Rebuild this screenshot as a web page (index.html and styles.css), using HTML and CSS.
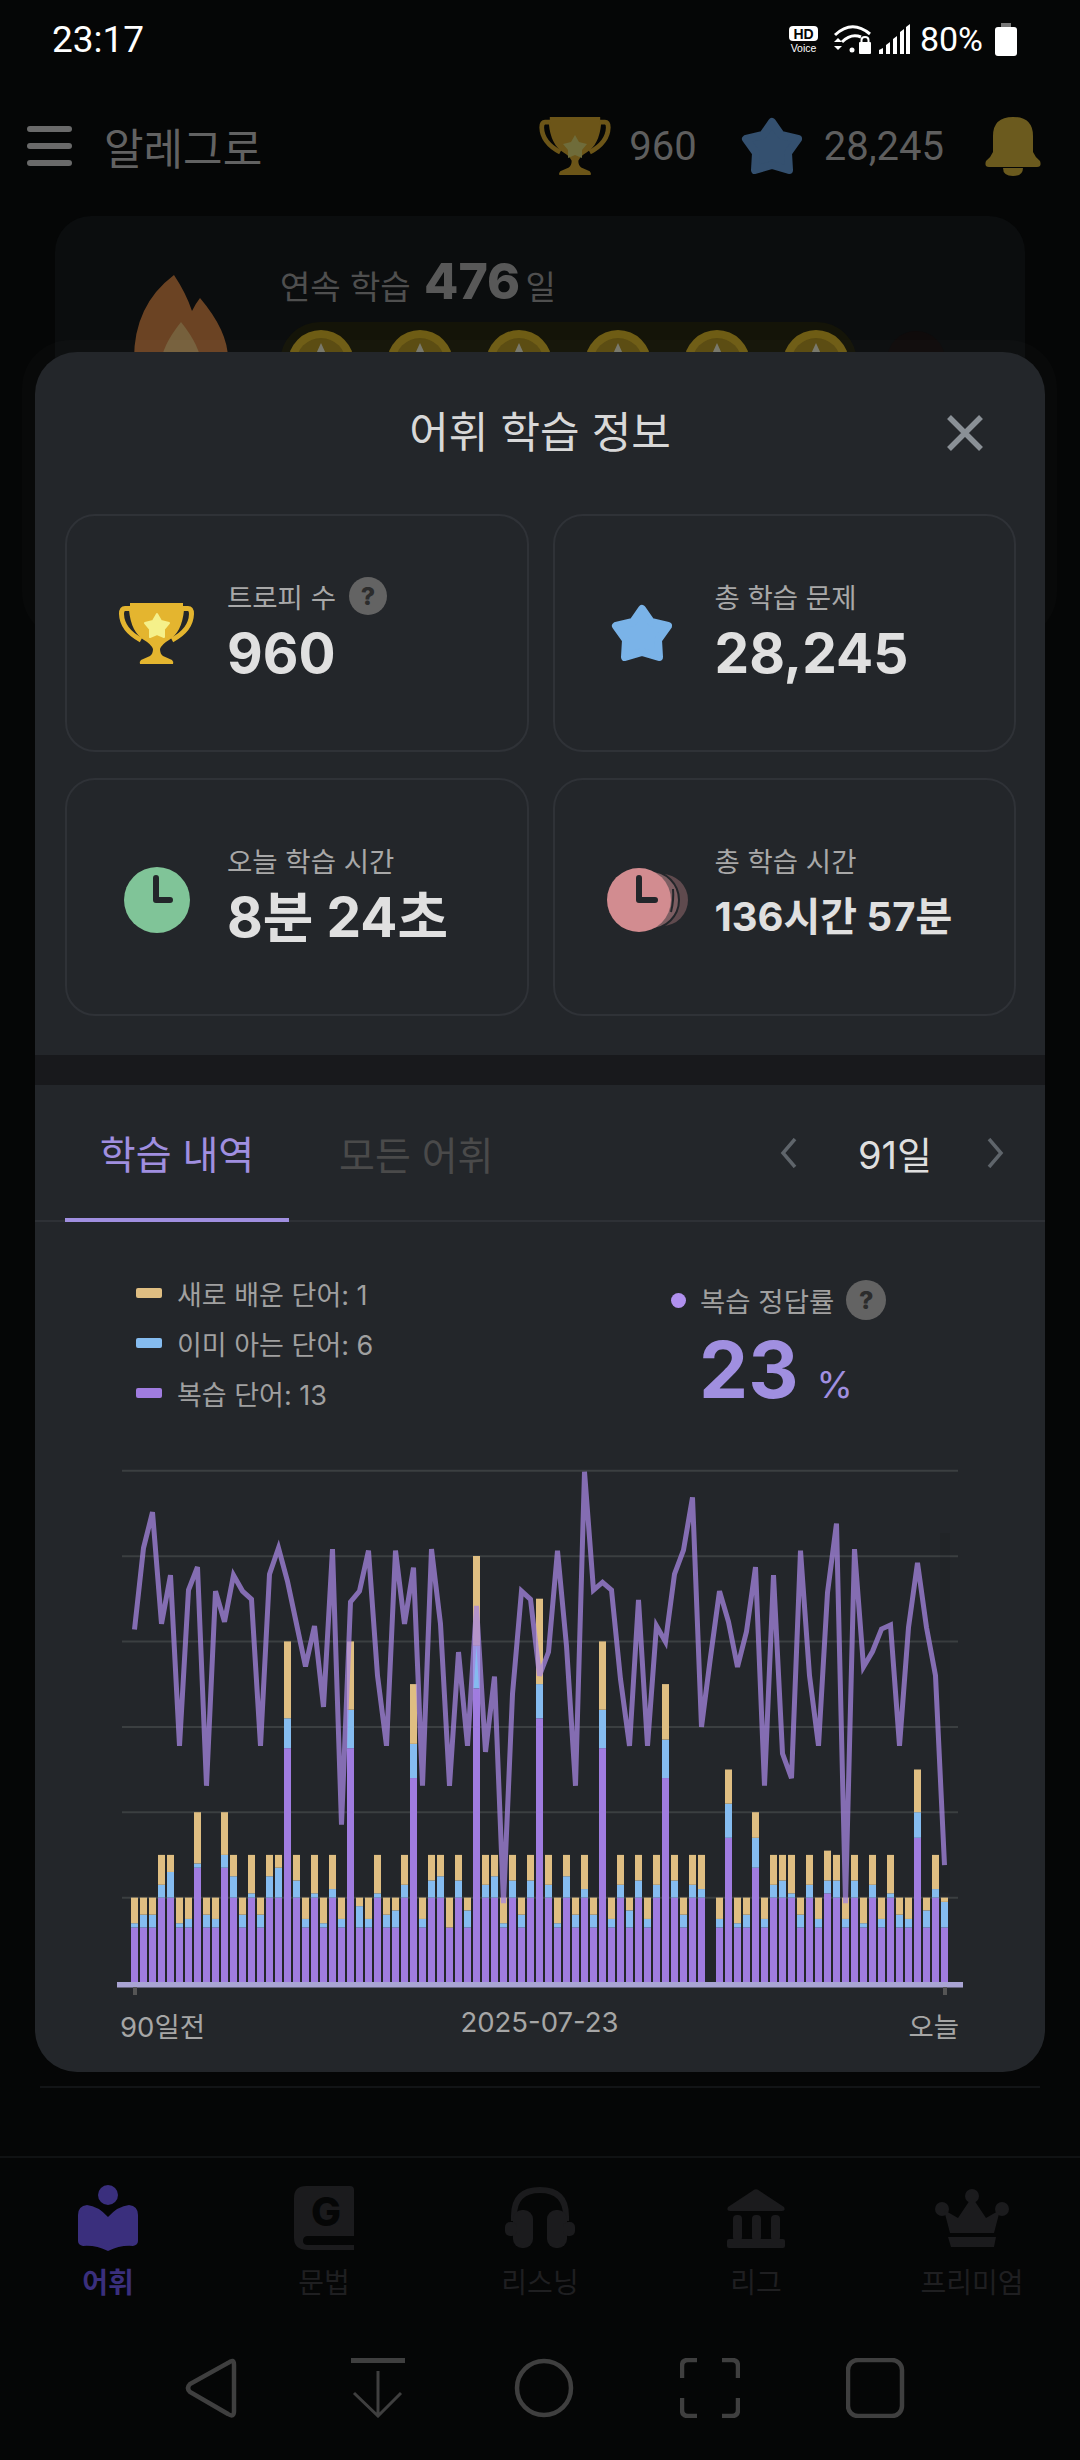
FILE: index.html
```html
<!DOCTYPE html>
<html lang="ko">
<head>
    <meta charset="UTF-8">
    <meta name="viewport" content="width=device-width, initial-scale=1.0">
    <title>알레그로 - 어휘 학습 정보</title>
    <link rel="stylesheet" href="styles.css">
</head>
<body>

    <svg class="defs" width="0" height="0">
        <symbol id="star" viewBox="0 0 64 60">
            <polygon points="32,6 41,19 58,23 48,37 49,54 32,49 15,54 16,37 6,23 23,19" stroke-width="8" stroke-linejoin="round"/>
        </symbol>
        <symbol id="cup" viewBox="9 13 75 61">
            <path d="M20 13H73V17L74 20Q72 42 59 50Q52 54 50 59Q50 64 53 66L62 70Q64 72 63 74H30Q29 72 31 70L40 66Q43 64 43 59Q41 54 34 50Q21 42 19 20L20 17Z"/>
            <path d="M21 18.500H15Q11.500 18.500 11.500 24Q12 40 31 50M72 18.500H78Q81.500 18.500 81.500 24Q81 40 62 50" fill="none" stroke-width="5" stroke="currentColor"/>
        </symbol>
        <symbol id="coin" viewBox="0 0 66 66">
            <circle cx="33" cy="33" r="33" fill="#6e5c14"/>
            <circle cx="33" cy="33" r="25" fill="#5a4b10"/>
            <path d="M33 13L38 24H28Z" fill="#77776a"/>
        </symbol>
    </svg>

    <div class="status">
        <span class="clock">23:17</span>
        <div class="status-icons">
            <svg class="hd" width="32" height="27" viewBox="0 0 32 27">
                <rect x="1" y="0" width="29" height="15" rx="4" fill="#fff"/>
                <text x="15.500" y="12.500" text-anchor="middle" class="hd-mark">HD</text>
                <text x="15.500" y="26" text-anchor="middle" class="hd-voice">Voice</text>
            </svg>
            <svg class="wifi" width="40" height="32" viewBox="0 0 40 32">
                <path d="M2 12Q19 -4 37 11M9 19Q18 10 28 14" fill="none" stroke="#fff" stroke-width="3"/>
                <circle cx="19" cy="27" r="2.500" fill="#fff"/>
                <path d="M1 19H9L5 15ZM1 23H9L5 27Z" fill="#fff"/>
                <rect x="26" y="19" width="12" height="12" rx="1" fill="#fff"/>
                <path d="M28.500 19V17Q28.500 14 32 14Q35.500 14 35.500 17V19" fill="none" stroke="#fff" stroke-width="2"/>
            </svg>
            <svg class="signal" width="32" height="32" viewBox="0 0 32 32">
                <path d="M0 31V27L4 25V31ZM7 31V22L11 19V31ZM14 31V16L18 13V31ZM21 31V9L25 6V31ZM27 31V4L31 1V31Z" fill="#fff"/>
            </svg>
            <span class="battery-text">80%</span>
            <div class="battery"></div>
        </div>
    </div>

    <div class="topbar">
        <div class="burger"><i></i><i></i><i></i></div>
        <span class="app-name">알레그로</span>
        <div class="top-stats">
            <svg class="top-trophy" width="72" height="58"><use href="#cup"/><polygon points="36,18 40,25 48,27 43,33 43,41 36,38 29,41 29,33 24,27 32,25" fill="#6f6c3a"/></svg>
            <span class="top-num">960</span>
            <svg class="top-star" width="64" height="60"><use href="#star"/></svg>
            <span class="top-num">28,245</span>
            <svg class="top-bell" width="56" height="60" viewBox="0 0 56 60">
                <path d="M8 36V20Q8 1 28 1Q48 1 48 20V36Q50 41 55 45Q57 51 52 51H4Q-1 51 1 45Q6 41 8 36Z"/>
                <path d="M18 52H38Q38 60 28 60Q18 60 18 52Z"/>
            </svg>
        </div>
    </div>

    <section class="streak">
        <svg class="flame" width="94" height="110" viewBox="0 0 94 110">
            <path d="M40 0Q52 18 58 36Q62 28 66 23Q94 56 94 84Q94 110 47 110Q0 110 0 84Q0 30 40 0Z" fill="#6b4323"/>
            <path d="M47 47Q67 72 67 90Q67 110 47 110Q27 110 27 90Q27 72 47 47Z" fill="#76603c"/>
        </svg>
        <div class="streak-body">
            <p class="streak-line">연속 학습 <b>476</b> 일</p>
            <div class="coin-row">
                <div class="coins">
                    <svg width="66" height="66"><use href="#coin"/></svg>
                    <svg width="66" height="66"><use href="#coin"/></svg>
                    <svg width="66" height="66"><use href="#coin"/></svg>
                    <svg width="66" height="66"><use href="#coin"/></svg>
                    <svg width="66" height="66"><use href="#coin"/></svg>
                    <svg width="66" height="66"><use href="#coin"/></svg>
                </div>
                <div class="coin-off"></div>
            </div>
        </div>
    </section>

    <div class="rest"></div>

    <nav class="tabbar">
        <div class="tabbar-item active">
            <svg width="60" height="66" viewBox="0 0 60 66">
                <circle cx="30" cy="10" r="10"/>
                <path d="M0 30Q0 21 9 20Q20 21 30 32Q40 21 51 20Q60 21 60 30V56Q60 60 55 61Q42 60 30 66Q18 60 5 61Q0 60 0 56Z"/>
            </svg>
            <span>어휘</span>
        </div>
        <div class="tabbar-item">
            <svg width="60" height="66" viewBox="0 0 60 66">
                <path d="M12 1H56Q60 1 60 5V51H14Q9 51 9 56Q9 60 14 60H60V65H14Q0 65 0 53V13Q0 1 12 1Z"/>
                <text x="32" y="41" text-anchor="middle" class="book-letter">G</text>
            </svg>
            <span>문법</span>
        </div>
        <div class="tabbar-item">
            <svg width="70" height="66" viewBox="0 0 70 66">
                <path d="M9 36V31Q9 5 35 5Q61 5 61 31V36" fill="none" stroke="#1b1b1d" stroke-width="6"/>
                <rect x="8" y="25" width="20" height="38" rx="9"/>
                <rect x="42" y="25" width="20" height="38" rx="9"/>
                <rect x="0" y="37" width="12" height="14" rx="5"/>
                <rect x="58" y="37" width="12" height="14" rx="5"/>
            </svg>
            <span>리스닝</span>
        </div>
        <div class="tabbar-item">
            <svg width="58" height="66" viewBox="0 0 58 66">
                <path d="M26 5.500Q29 3 32 5.500L57 22Q59 26 55 26H3Q-1 26 1 22Z"/>
                <rect x="6" y="30" width="9" height="26" rx="4"/>
                <rect x="25" y="30" width="9" height="26" rx="4"/>
                <rect x="44" y="30" width="9" height="26" rx="4"/>
                <rect x="0" y="54" width="58" height="9" rx="2"/>
            </svg>
            <span>리그</span>
        </div>
        <div class="tabbar-item">
            <svg width="74" height="66" viewBox="0 0 74 66">
                <circle cx="37" cy="11" r="7"/>
                <circle cx="7" cy="24" r="7"/>
                <circle cx="67" cy="24" r="7"/>
                <path d="M9 25L23 33L37 12L51 33L65 25L59 48H15Z"/>
                <path d="M13 52H61L59 62H16Z"/>
            </svg>
            <span>프리미엄</span>
        </div>
    </nav>

    <div class="sysnav">
        <svg width="60" height="60" viewBox="0 0 60 60"><path d="M52 7Q52 0 46 5L8 26Q4 30 8 34L46 56Q52 60 52 53Z"/></svg>
        <svg width="60" height="60" viewBox="0 0 60 60">
            <path d="M3 2.500H57" stroke-width="5"/>
            <path d="M30 13V58M6 35L30 58L53 35" stroke-width="3"/>
        </svg>
        <svg width="60" height="60" viewBox="0 0 60 60"><circle cx="30" cy="30" r="27"/></svg>
        <svg width="60" height="60" viewBox="0 0 60 60"><path d="M2 20V8Q2 2 8 2H17M42 2H52Q58 2 58 8V20M58 40V52Q58 58 52 58H42M17 58H8Q2 58 2 52V40"/></svg>
        <svg width="60" height="60" viewBox="0 0 60 60"><rect x="2" y="2" width="54" height="56" rx="10"/></svg>
    </div>

    <div class="sheet-back"></div>

    <section class="sheet">
        <header class="sheet-head">
            <h1>어휘 학습 정보</h1>
            <svg class="sheet-close" width="36" height="36" viewBox="0 0 36 36"><path d="M2 2L34 34M34 2L2 34"/></svg>
        </header>

        <div class="stat-grid">
            <div class="stat-card">
                <svg class="stat-icon trophy" width="75" height="61">
                    <use href="#cup"/>
                    <polygon points="38,11 42,18 50,20 45,26 45,34 38,31 31,34 31,26 26,20 34,18" fill="#f5f08a" stroke="#f5f08a" stroke-width="2" stroke-linejoin="round"/>
                </svg>
                <div class="stat-text">
                    <div class="stat-label">트로피 수 <span class="help">?</span></div>
                    <div class="stat-value">960</div>
                </div>
            </div>
            <div class="stat-card">
                <svg class="stat-icon star-blue" width="64" height="60"><use href="#star"/></svg>
                <div class="stat-text">
                    <div class="stat-label">총 학습 문제</div>
                    <div class="stat-value">28,245</div>
                </div>
            </div>
            <div class="stat-card">
                <svg class="stat-icon clock-green" width="66" height="66" viewBox="0 0 66 66">
                    <circle cx="33" cy="33" r="33" fill="#80c498"/>
                    <path d="M32 11V33H46" class="clock-hand"/>
                </svg>
                <div class="stat-text">
                    <div class="stat-label">오늘 학습 시간</div>
                    <div class="stat-value">8분 24초</div>
                </div>
            </div>
            <div class="stat-card">
                <svg class="stat-icon" width="82" height="66" viewBox="0 0 82 66">
                    <circle cx="55" cy="33" r="26" fill="#5f4a4e"/>
                    <circle cx="43" cy="33" r="29" fill="#7c5e62" stroke="#23262a" stroke-width="2"/>
                    <circle cx="32" cy="33" r="32" fill="#d28c90"/>
                    <path d="M66 22Q67 33 64 45" fill="none" stroke="#23262a" stroke-width="2"/>
                    <path d="M32 11V33H48" class="clock-hand"/>
                </svg>
                <div class="stat-text">
                    <div class="stat-label">총 학습 시간</div>
                    <div class="stat-value small">136시간 57분</div>
                </div>
            </div>
        </div>

        <div class="band"></div>

        <div class="tabs">
            <div class="tab current">학습 내역</div>
            <div class="tab">모든 어휘</div>
            <div class="range">
                <svg width="17" height="30" viewBox="0 0 17 30"><path d="M15 1L3 15L15 29"/></svg>
                <span>91일</span>
                <svg width="17" height="30" viewBox="0 0 17 30"><path d="M2 1L14 15L2 29"/></svg>
            </div>
        </div>

        <div class="summary">
            <ul class="legend">
                <li><i class="swatch tan"></i>새로 배운 단어: 1</li>
                <li><i class="swatch blue"></i>이미 아는 단어: 6</li>
                <li><i class="swatch purple"></i>복습 단어: 13</li>
            </ul>
            <div class="rate">
                <div class="rate-label"><i class="rate-dot"></i>복습 정답률 <span class="help big">?</span></div>
                <div class="rate-value"><span>23</span><small>%</small></div>
            </div>
        </div>

        <svg id="chart" class="chart" width="1010" height="540" viewBox="0 0 1010 540"></svg>

        <div class="chart-labels">
            <span>90일전</span>
            <span>2025-07-23</span>
            <span class="to-right">오늘</span>
        </div>
    </section>

    <script src="chart.js"></script>
</body>
</html>
```

FILE: styles.css
```css
* {
    box-sizing: border-box;
}
body {
    margin: 0;
    width: 1080px;
    height: 2460px;
    position: relative;
    overflow: hidden;
    display: flex;
    flex-direction: column;
    background-color: #050606;
    font-family: Inter, "Noto Sans CJK KR", sans-serif;
    color: #dfdfdf;
}
.defs {
    position: absolute;
}

/* status bar */
.status {
    height: 78px;
    padding: 0 63px 0 52px;
    display: flex;
    align-items: center;
    justify-content: space-between;
    font-family: Roboto, sans-serif;
    color: #fff;
}
.clock {
    font-size: 37px;
}
.status-icons {
    display: flex;
    align-items: center;
}
.hd {
    margin-right: 13px;
}
.hd-mark {
    font: 900 14px "Liberation Sans", sans-serif;
    fill: #050606;
}
.hd-voice {
    font: 10.500px "Liberation Sans", sans-serif;
    fill: #fff;
}
.wifi {
    margin-right: 6px;
}
.signal {
    margin-right: 9px;
}
.battery-text {
    font-size: 34px;
    margin-right: 12px;
}
.battery {
    width: 22px;
    height: 29px;
    margin-top: 4px;
    border-radius: 3px;
    background: #fff;
    position: relative;
}
.battery::before {
    content: "";
    position: absolute;
    left: 6px;
    top: -4px;
    width: 10px;
    height: 4px;
    background: #777;
}

/* app header, dimmed behind the sheet */
.topbar {
    height: 64px;
    margin-top: 36px;
    padding: 0 39px 0 27px;
    display: flex;
    align-items: center;
}
.burger {
    width: 45px;
    display: flex;
    flex-direction: column;
    gap: 11px;
}
.burger i {
    height: 6px;
    border-radius: 3px;
    background: #6a6a6a;
}
.app-name {
    margin-left: 32px;
    font-size: 43px;
    color: #626262;
}
.top-stats {
    margin-left: auto;
    display: flex;
    align-items: center;
}
.top-trophy {
    fill: #6c5518;
    color: #6c5518;
}
.top-num {
    margin-left: 18px;
    font-family: Roboto, sans-serif;
    font-size: 40px;
    color: #5e5e5e;
}
.top-star {
    margin-left: 43px;
    fill: #34506f;
    stroke: #34506f;
}
.top-star + .top-num {
    margin-left: 20px;
}
.top-bell {
    margin-left: 41px;
    fill: #6b5a1e;
}

/* streak card, mostly covered */
.streak {
    height: 400px;
    margin: 38px 55px 0;
    padding: 35px 0 0 79px;
    border-radius: 36px;
    background: #0b0d0e;
    display: flex;
}
.flame {
    margin-top: 24px;
    flex: none;
}
.streak-body {
    margin-left: 52px;
}
.streak-line {
    margin: 0;
    height: 48px;
    font-size: 33px;
    color: #4f4f4f;
}
.streak-line b {
    font-size: 50px;
    font-weight: 800;
    color: #585858;
    margin: 0 -4px 0 4px;
}
.coin-row {
    margin-top: 23px;
    display: flex;
    align-items: flex-start;
}
.coins {
    display: flex;
    gap: 33px;
    padding: 8px 8px 8px 8px;
    border-radius: 40px;
    background: #141408;
}
.coin-off {
    width: 58px;
    height: 58px;
    margin: 9px 0 0 30px;
    border-radius: 50%;
    background: #0f0b0b;
}

.rest {
    height: 1472px;
    flex: none;
    border-bottom: 2px solid #121416;
    margin: 0 40px;
}

/* bottom tabs */
.tabbar {
    margin-top: 68px;
    padding-top: 27px;
    height: 202px;
    border-top: 2px solid #101213;
    display: grid;
    grid-template-columns: repeat(5, 1fr);
}
.tabbar-item {
    display: flex;
    flex-direction: column;
    align-items: center;
    fill: #1b1b1d;
    color: #1f1f21;
    font-size: 28px;
}
.tabbar-item span {
    margin-top: 10px;
}
.tabbar-item.active {
    fill: #3a2f7d;
    color: #3a2f7d;
    font-weight: 700;
}
.book-letter {
    font: 800 40px Inter, sans-serif;
    fill: #050606;
}

/* android buttons */
.sysnav {
    padding-left: 182px;
    display: flex;
    gap: 106px;
}
.sysnav svg {
    fill: none;
    stroke: #3f3f3f;
    stroke-width: 4.500px;
}

/* bottom sheet */
.sheet-back {
    position: absolute;
    left: 22px;
    top: 340px;
    width: 1035px;
    height: 300px;
    border-radius: 48px;
    background: rgba(255, 255, 255, 0.015);
}
.sheet {
    position: absolute;
    left: 35px;
    top: 352px;
    width: 1010px;
    height: 1720px;
    border-radius: 42px;
    background: #23262a;
}
.sheet-head {
    height: 158px;
    padding-bottom: 5px;
    display: flex;
    align-items: center;
    justify-content: center;
    position: relative;
}
.sheet-head h1 {
    margin: 0;
    font-size: 43px;
    font-weight: 400;
    color: #d8d8d8;
}
.sheet-close {
    position: absolute;
    right: 62px;
    top: 63px;
    fill: none;
    stroke: #8a9096;
    stroke-width: 5.500px;
}

.stat-grid {
    margin-top: 4px;
    padding: 0 29px 0 30px;
    display: grid;
    grid-template-columns: 1fr 1fr;
    grid-auto-rows: 238px;
    gap: 26px 24px;
}
.stat-card {
    position: relative;
    padding: 59px 0 0 160px;
    border: 2px solid #2f3237;
    border-radius: 30px;
}
.stat-icon {
    position: absolute;
    left: 52px;
    top: 87px;
}
.trophy {
    fill: #e4b52f;
    color: #e4b52f;
}
.star-blue {
    fill: #7ab3e8;
    stroke: #7ab3e8;
    left: 55px;
}
.clock-green {
    left: 57px;
}
.clock-hand {
    fill: none;
    stroke: #23262a;
    stroke-width: 6px;
    stroke-linecap: round;
    stroke-linejoin: round;
}
.stat-label {
    height: 42px;
    display: flex;
    align-items: center;
    gap: 13px;
    font-size: 27.500px;
    color: #a8a8a8;
}
.stat-value {
    margin-top: 1px;
    font-size: 55px;
    font-weight: 700;
    line-height: 70px;
    color: #e0e0e0;
}
.stat-value.small {
    font-size: 40px;
}
.help {
    width: 38px;
    height: 38px;
    border-radius: 50%;
    background: #636363;
    color: #2c2c2c;
    font-size: 25px;
    font-weight: 800;
    display: inline-flex;
    align-items: center;
    justify-content: center;
}
.help.big {
    width: 40px;
    height: 40px;
}

.band {
    height: 30px;
    margin-top: 39px;
    background: #18191c;
}

.tabs {
    height: 137px;
    padding-left: 30px;
    border-bottom: 2px solid #2e3136;
    display: flex;
    font-size: 39px;
    color: #4a4a4a;
}
.tab {
    height: 137px;
    width: 224px;
    display: flex;
    align-items: center;
    justify-content: center;
}
.tab.current {
    color: #a08fe0;
    border-bottom: 4px solid #a08fe0;
}
.tab + .tab {
    width: auto;
    margin-left: 50px;
    height: 135px;
}
.range {
    margin-left: auto;
    padding: 0 41px 0 0;
    display: flex;
    align-items: center;
    color: #dfdfdf;
    font-size: 38px;
}
.range span {
    margin: 0 55px 0 61px;
}
.range svg {
    fill: none;
    stroke: #5f656b;
    stroke-width: 3.500px;
}

.summary {
    height: 238px;
    display: flex;
}
.legend {
    width: 636px;
    margin: 0;
    padding: 46px 0 0 101px;
    list-style: none;
    font-size: 27px;
    color: #a0a0a0;
}
.legend li {
    height: 50px;
    display: flex;
    align-items: center;
}
.swatch {
    width: 26px;
    height: 10px;
    margin-right: 15px;
    border-radius: 2px;
}
.tan {
    background: #dfbe82;
}
.blue {
    background: #85bcf0;
}
.purple {
    background: #a07ce0;
}
.rate {
    padding-top: 58px;
}
.rate-label {
    height: 40px;
    display: flex;
    align-items: center;
    font-size: 27.500px;
    color: #a0a0a0;
}
.rate-dot {
    width: 15px;
    height: 15px;
    margin-right: 14px;
    border-radius: 50%;
    background: #b090ee;
}
.rate-label .help {
    margin-left: 12px;
}
.rate-value {
    margin: 8px 0 0 28px;
    display: flex;
    align-items: baseline;
    gap: 18px;
    font-size: 78px;
    font-weight: 700;
    line-height: 84px;
    color: #a08fe0;
}
.rate-value small {
    font-size: 37px;
    font-weight: 400;
}

.chart {
    display: block;
}
.chart-labels {
    padding: 5px 86px 0 85px;
    display: grid;
    grid-template-columns: 1fr auto 1fr;
    font-size: 27.500px;
    color: #a6a6a6;
}
.to-right {
    text-align: right;
}
```

FILE: chart.js
```js
// per day, oldest first: [review, known, new]
const bars = [
    [13,1,6],[13,3,4],[13,3,4],[20,3,7],[20,6,4],[13,1,6],[13,2,5],[27,1,12],[13,3,4],[13,2,5],
    [27,3,10],[20,5,5],[13,3,4],[20,1,9],[13,3,4],[20,5,5],[20,7,3],[55,7,18],[20,4,6],[13,2,5],
    [20,1,9],[13,1,6],[20,2,8],[13,2,5],[55,9,16],[13,5,2],[13,2,5],[20,1,9],[13,3,4],[13,4,3],
    [20,3,7],[48,8,14],[13,2,5],[20,4,6],[20,5,5],[13,0,7],[20,4,6],[13,4,3],[69,10,21],[20,3,7],
    [20,5,5],[13,1,6],[20,4,6],[13,3,4],[20,4,6],[62,8,20],[20,3,7],[13,1,6],[20,5,5],[13,3,4],
    [20,2,8],[13,3,4],[55,9,16],[13,2,5],[20,3,7],[13,4,3],[20,4,6],[13,2,5],[20,3,7],[48,9,13],
    [20,4,6],[13,3,4],[20,3,7],[20,2,8],[0,0,0],[13,2,5],[34,8,8],[13,1,6],[13,3,4],[27,7,6],
    [13,2,5],[20,3,7],[20,4,6],[20,1,9],[13,3,4],[20,3,7],[13,2,5],[21,3,7],[20,4,6],[13,2,5],
    [20,4,6],[13,1,6],[20,3,7],[13,2,5],[20,1,9],[13,3,4],[13,2,5],[34,6,10],[13,4,3],[20,2,8],
    [13,6,1]
];

// review accuracy per day, percent
const rate = [
    69,84.9,91.9,70.1,79.6,46.3,76.7,81.2,38.5,76.5,
    70.5,79.6,76.5,74.9,46.3,79.8,84.9,78.4,70.1,61.8,
    69.7,53.9,84.7,30.9,74.4,76.5,84.4,60,46.3,84.4,
    70.1,81.1,38.5,84.7,70.1,38.5,64.6,46.3,73.6,45.1,
    59.8,15.6,56.4,76.5,74.9,60,64.6,84.4,65.8,38.5,
    99.8,76.7,78.2,76.7,59.3,46.3,74.8,46.3,69.7,66.6,
    79.8,84.5,94.8,50,63.6,76.5,70.5,61.7,68.6,81.2,
    38.5,79.6,44.8,40,84.4,60,46.3,76.2,89.7,15.6,
    84.7,61.7,64.7,69.1,69.9,46.3,69.4,82,69.4,60,
    23
];

const NS = "http://www.w3.org/2000/svg";
const chart = document.getElementById("chart");
const BASE = 523;
const UNIT = 4.27;
const PCT = 5.123;
const colors = ["#a07ce0", "#85bcf0", "#dfbe82"];

function add(tag, attrs) {
    const el = document.createElementNS(NS, tag);
    for (const key in attrs) {
        el.setAttribute(key, attrs[key]);
    }
    chart.appendChild(el);
}

for (let k = 1; k <= 6; k++) {
    const y = BASE - k * 85.37;
    add("line", { x1: 87, x2: 923, y1: y, y2: y, stroke: "#3b3f41", "stroke-width": 2 });
}

// hover column on the last day
add("rect", { x: 905, y: 73, width: 10, height: 360, fill: "#000", opacity: 0.05 });

bars.forEach((day, i) => {
    let top = BASE;
    day.forEach((count, c) => {
        if (!count) return;
        const h = count * UNIT;
        top -= h;
        add("rect", { x: 96 + 9 * i, y: top, width: 7, height: h, fill: colors[c] });
    });
});

const points = rate.map((v, i) => (99.5 + 9 * i) + "," + (BASE - v * PCT)).join(" ");
add("polyline", { points, fill: "none", stroke: "#a585e0", "stroke-width": 5, "stroke-opacity": 0.75 });

add("rect", { x: 82, y: 522, width: 846, height: 5.5, fill: "#a9a4d4" });
add("rect", { x: 98, y: 527, width: 4, height: 8, fill: "#555" });
add("rect", { x: 908, y: 527, width: 4, height: 8, fill: "#555" });
```
